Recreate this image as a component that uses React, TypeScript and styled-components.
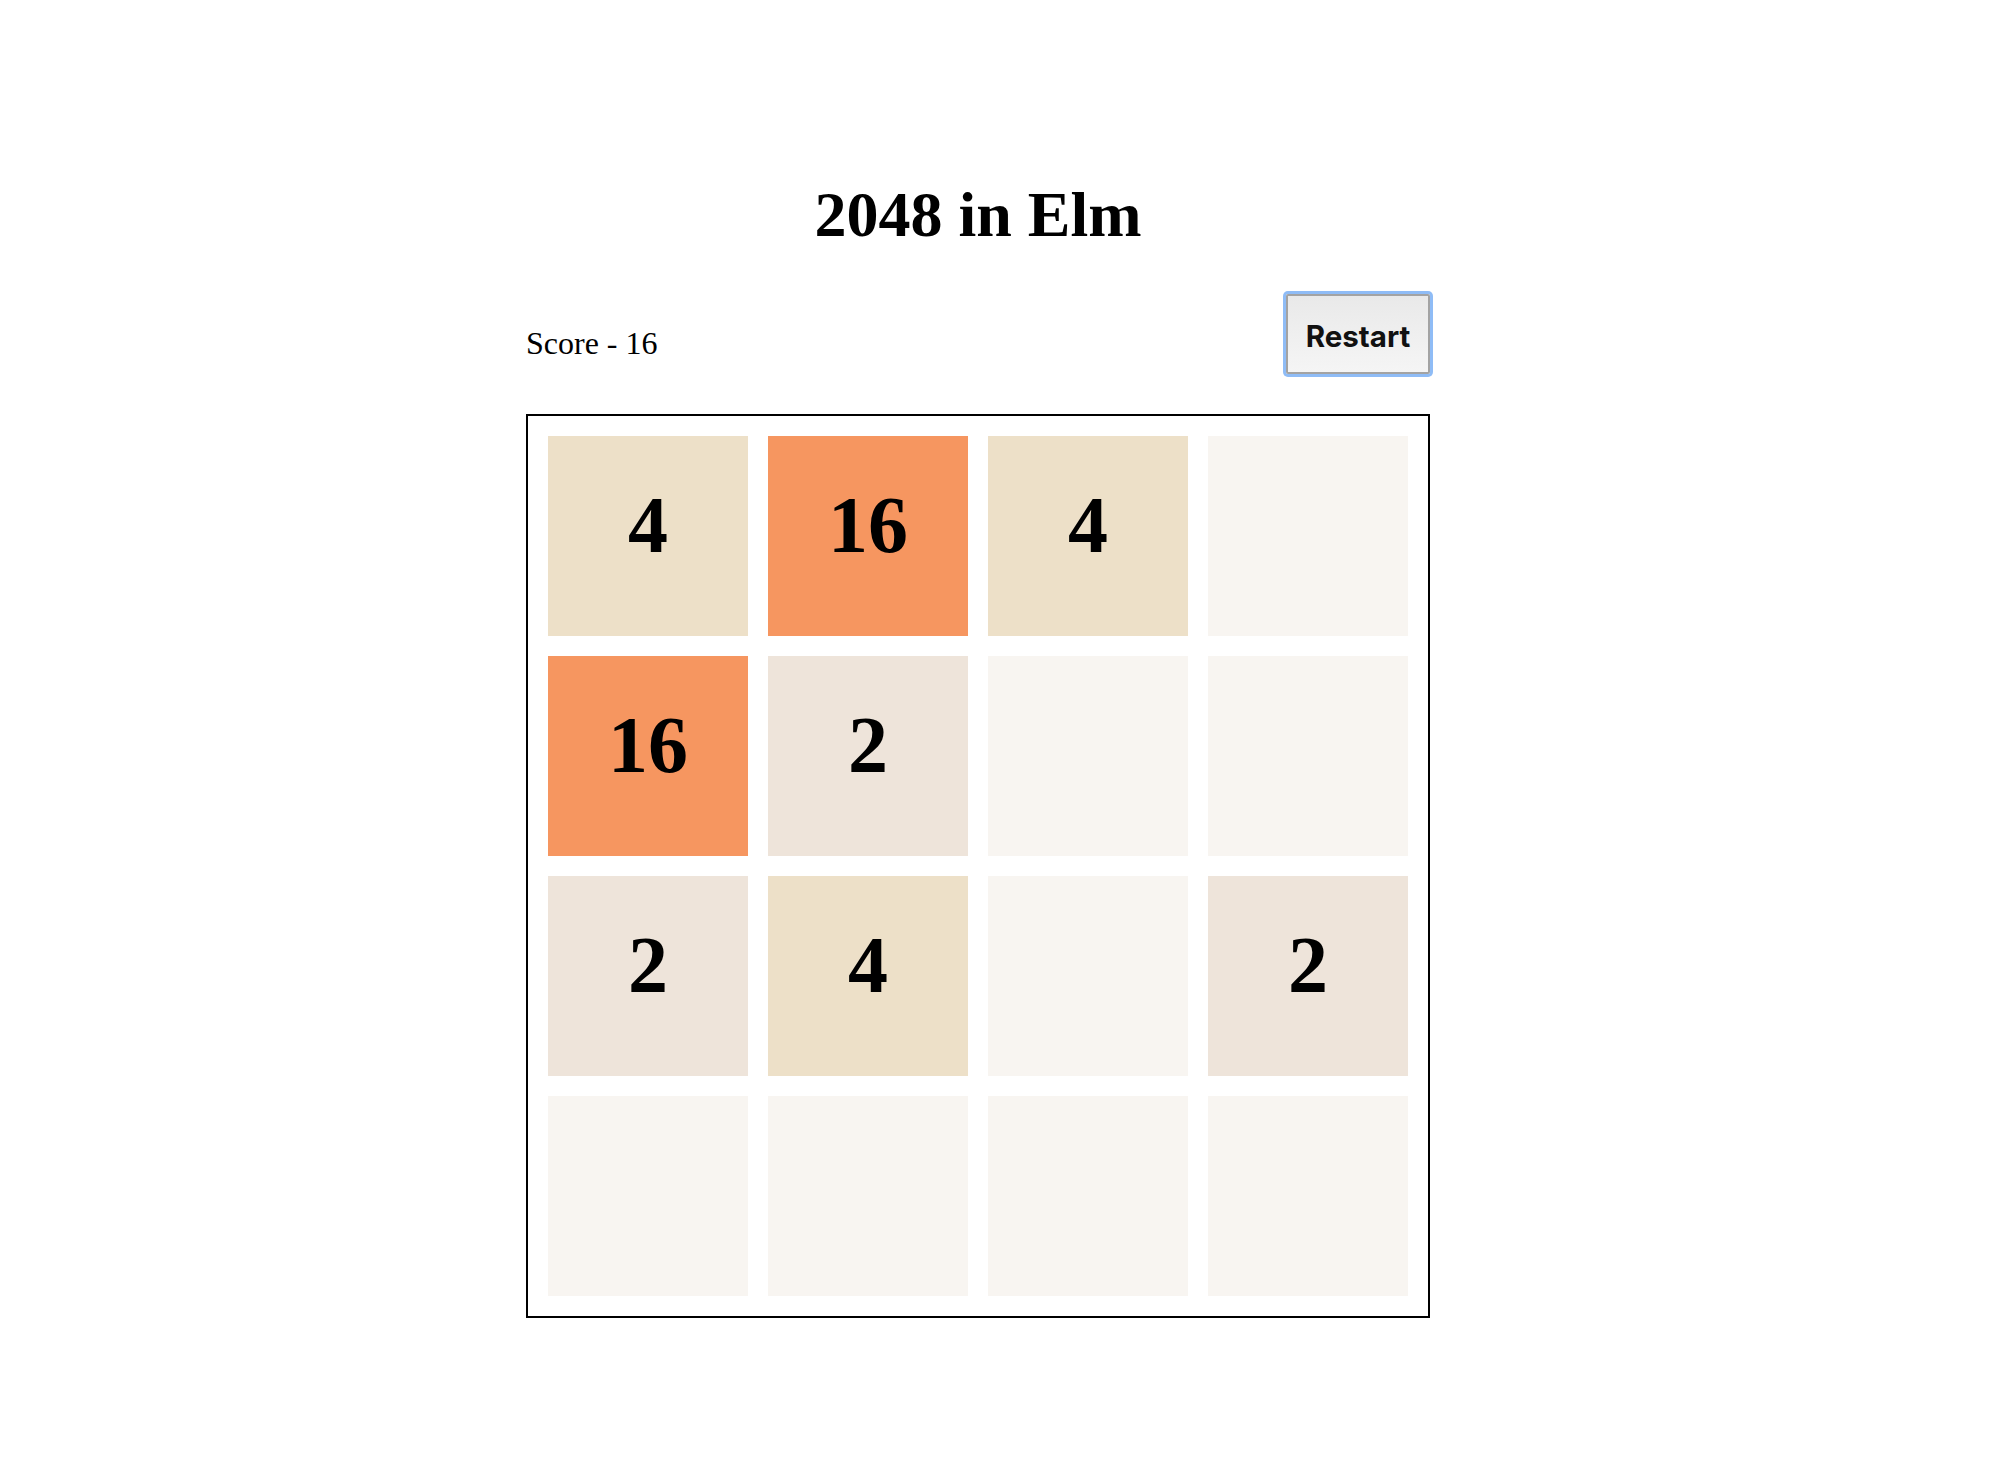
import React from "react";
import styled, { createGlobalStyle } from "styled-components";

const GlobalStyle = createGlobalStyle`
  html, body {
    margin: 0;
    padding: 0;
    background: #ffffff;
  }
  body {
    font-family: "Liberation Serif", "Times New Roman", serif;
    color: #000;
  }
`;

const Page = styled.main`
  width: 904px;
  margin-left: 526px;
  padding-top: 178px;
  display: flex;
  flex-direction: column;
`;

const Title = styled.h1`
  margin: 0;
  font-family: "Liberation Serif", "Times New Roman", serif;
  font-weight: 700;
  font-size: 64px;
  line-height: 74px;
  text-align: center;
`;

const Header = styled.div`
  margin-top: 42px;
  display: flex;
  justify-content: space-between;
  align-items: flex-start;
`;

const Score = styled.div`
  margin-top: 31px;
  font-family: "Liberation Serif", "Times New Roman", serif;
  font-size: 32px;
  line-height: 37px;
`;

const RestartButton = styled.button`
  width: 144px;
  height: 80px;
  padding: 4px 0 0;
  display: flex;
  align-items: center;
  justify-content: center;
  font-family: Inter, "Liberation Sans", Arial, sans-serif;
  font-weight: 700;
  font-size: 29.5px;
  color: #111;
  background: linear-gradient(#e9e9e9, #f5f5f5);
  border: 2px solid #a3a3a3;
  border-radius: 2px;
  box-shadow: 0 0 0 3px #8fbcf6;
  cursor: pointer;
`;

const Board = styled.div`
  margin-top: 40px;
  border: 2px solid #000;
  padding: 20px;
  display: grid;
  grid-template-columns: repeat(4, 200px);
  grid-auto-rows: 200px;
  gap: 20px;
`;

const tileColors: Record<number, string> = {
  0: "#f8f5f1",
  2: "#eee4da",
  4: "#ede0c8",
  8: "#f2b179",
  16: "#f69660",
  32: "#f67c5f",
  64: "#f65e3b",
};

const Tile = styled.div<{ $value: number }>`
  display: flex;
  align-items: center;
  justify-content: center;
  padding-bottom: 22px;
  box-sizing: border-box;
  background: ${(p) => tileColors[p.$value] ?? "#edc22e"};
  font-family: "Liberation Serif", "Times New Roman", serif;
  font-weight: 700;
  font-size: 80px;
`;

const grid: number[][] = [
  [4, 16, 4, 0],
  [16, 2, 0, 0],
  [2, 4, 0, 2],
  [0, 0, 0, 0],
];

export default function App() {
  return (
    <>
      <GlobalStyle />
      <Page>
        <Title>2048 in Elm</Title>
        <Header>
          <Score>Score - 16</Score>
          <RestartButton>Restart</RestartButton>
        </Header>
        <Board>
          {grid.flatMap((row, r) =>
            row.map((v, c) => (
              <Tile key={`${r}-${c}`} $value={v}>
                {v !== 0 ? v : ""}
              </Tile>
            ))
          )}
        </Board>
      </Page>
    </>
  );
}
